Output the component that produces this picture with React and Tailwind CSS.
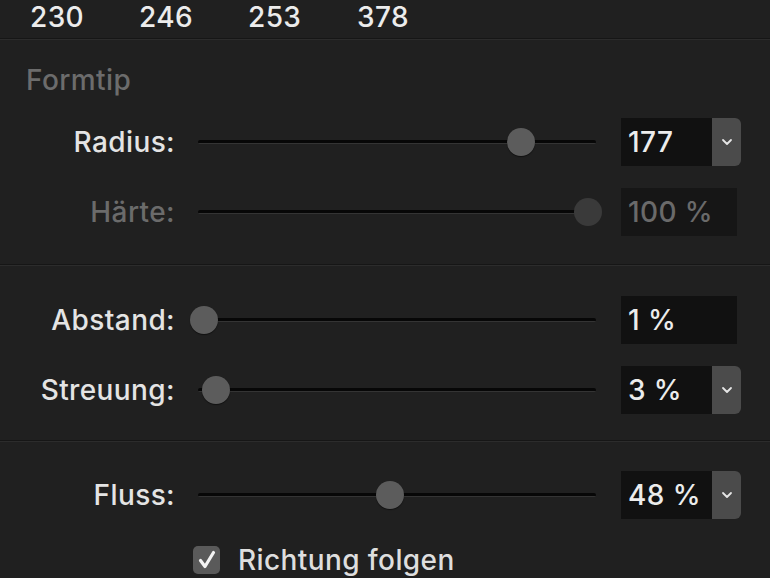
import React from "react";

const Divider = () => (
  <div className="h-[2px] w-full border-t border-t-[#161616] border-b border-b-[#2c2c2c]" />
);

const Chevron = () => (
  <svg width="12" height="8" viewBox="0 0 12 8" fill="none">
    <path d="M2 2 L6 6 L10 2" stroke="#e6e6e6" strokeWidth="1.8" strokeLinecap="round" strokeLinejoin="round" />
  </svg>
);

const Slider = ({ value, disabled }) => {
  const left = Math.round(value * 400) - 14;
  return (
    <div className="relative ml-[23px] h-[30px] w-[398px] flex items-center">
      <div className="h-[4px] w-full rounded-full border-t-[3px] border-t-[#070707] border-b border-b-[#343434]" />
      <div
        className={
          "absolute top-[1px] h-[28px] w-[28px] rounded-full " +
          (disabled ? "bg-[#3a3a3a]" : "bg-[#5c5c5c] shadow-[0_1px_1px_rgba(0,0,0,0.5)]")
        }
        style={{ left }}
      />
    </div>
  );
};

const ValueBox = ({ text, dropdown, disabled }) => (
  <div className="ml-[25px] flex h-[48px]">
    <div
      className={
        "flex items-center pl-[7px] h-full " +
        (dropdown ? "w-[91px] " : "w-[116px] ") +
        (disabled ? "bg-[#161616] text-[#6a6a6a]" : "bg-[#111111] text-[#ececec]")
      }
    >
      {text}
    </div>
    {dropdown && (
      <div className="flex h-full w-[29px] items-center justify-center rounded-r-[6px] bg-[#4b4b4b]">
        <Chevron />
      </div>
    )}
  </div>
);

const Row = ({ label, value, text, dropdown, disabled }) => (
  <div className="flex h-[70px] items-center">
    <div
      className={
        "w-[175px] text-right " + (disabled ? "text-[#6b6b6b]" : "text-[#e4e4e4]")
      }
    >
      {label}
    </div>
    <Slider value={value} disabled={disabled} />
    <ValueBox text={text} dropdown={dropdown} disabled={disabled} />
  </div>
);

export default function App() {
  const numbers = ["230", "246", "253", "378"];

  return (
    <div
      className="w-[770px] h-[578px] overflow-hidden bg-[#202020] text-[28px] leading-[28px] font-medium tracking-[0.4px]"
      style={{ fontFamily: "Inter, 'Liberation Sans', sans-serif" }}
    >
      <div className="flex h-[38px] pl-[30px] pt-[3px] text-[#ececec]">
        {numbers.map((n) => (
          <div key={n} className="w-[109px]">
            {n}
          </div>
        ))}
      </div>
      <Divider />

      <div className="h-[67px] pl-[26px] pt-[26px] text-[#6c6c6c]">Formtip</div>

      <Row label="Radius:" value={0.8075} text="177" dropdown />
      <Row label="Härte:" value={0.975} text="100 %" disabled />

      <div className="h-[17px]" />
      <Divider />
      <div className="h-[19px]" />

      <Row label="Abstand:" value={0.015} text="1 %" />
      <Row label="Streuung:" value={0.045} text="3 %" dropdown />

      <div className="h-[15px]" />
      <Divider />
      <div className="h-[18px]" />

      <Row label="Fluss:" value={0.48} text="48 %" dropdown />

      <div className="flex h-[60px] items-center pl-[193px]">
        <div className="flex h-[28px] w-[27px] items-center justify-center rounded-[5px] bg-[#5a5a5a]">
          <svg width="20" height="20" viewBox="0 0 20 20" fill="none">
            <path d="M3.5 10.5 L8 16.5 L16.5 2.5" stroke="#f2f2f2" strokeWidth="3.2" strokeLinecap="round" strokeLinejoin="round" />
          </svg>
        </div>
        <div className="ml-[18px] text-[#dedede]">Richtung folgen</div>
      </div>
    </div>
  );
}
